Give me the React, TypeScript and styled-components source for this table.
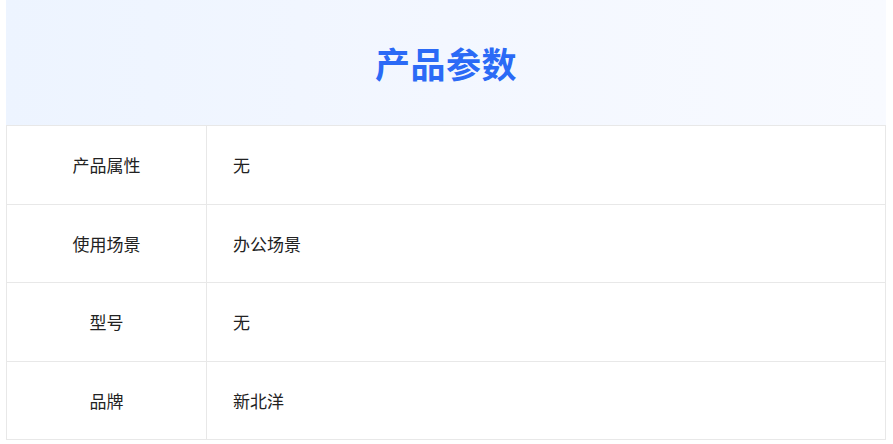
import React from "react";
import styled, { createGlobalStyle } from "styled-components";

const GlobalStyle = createGlobalStyle`
  html, body {
    margin: 0;
    padding: 0;
    background: #ffffff;
  }
  body {
    font-family: "Noto Sans CJK SC", "Noto Sans", "Liberation Sans", sans-serif;
  }
`;

const Page = styled.div`
  padding: 0 7px 0 6px;
`;

const ParamPanel = styled.section`
  width: 880px;
`;

const PanelHeader = styled.header`
  height: 126px;
  display: flex;
  align-items: center;
  justify-content: center;
  background: linear-gradient(90deg, #edf4ff 0%, #f3f7ff 50%, #f8faff 100%);
  border-bottom: 1px solid #e8e8e8;
  box-sizing: border-box;
`;

const Title = styled.h2`
  margin: 0;
  font-size: 35px;
  font-weight: 700;
  color: #2b6af6;
  letter-spacing: 0.5px;
`;

const Table = styled.div`
  border-left: 1px solid #e8e8e8;
  border-right: 1px solid #e8e8e8;
`;

const Row = styled.div`
  display: grid;
  grid-template-columns: 200px 1fr;
  height: 78.5px;
  border-bottom: 1px solid #e8e8e8;
  box-sizing: border-box;
`;

const LabelCell = styled.div`
  display: flex;
  align-items: center;
  justify-content: center;
  border-right: 1px solid #e8e8e8;
  font-size: 17px;
  color: #222;
`;

const ValueCell = styled.div`
  display: flex;
  align-items: center;
  padding-left: 26px;
  font-size: 17px;
  color: #222;
`;

const params = [
  { label: "产品属性", value: "无" },
  { label: "使用场景", value: "办公场景" },
  { label: "型号", value: "无" },
  { label: "品牌", value: "新北洋" },
];

export default function App() {
  return (
    <>
      <GlobalStyle />
      <Page>
        <ParamPanel>
          <PanelHeader>
            <Title>产品参数</Title>
          </PanelHeader>
          <Table>
            {params.map((p) => (
              <Row key={p.label}>
                <LabelCell>{p.label}</LabelCell>
                <ValueCell>{p.value}</ValueCell>
              </Row>
            ))}
          </Table>
        </ParamPanel>
      </Page>
    </>
  );
}
